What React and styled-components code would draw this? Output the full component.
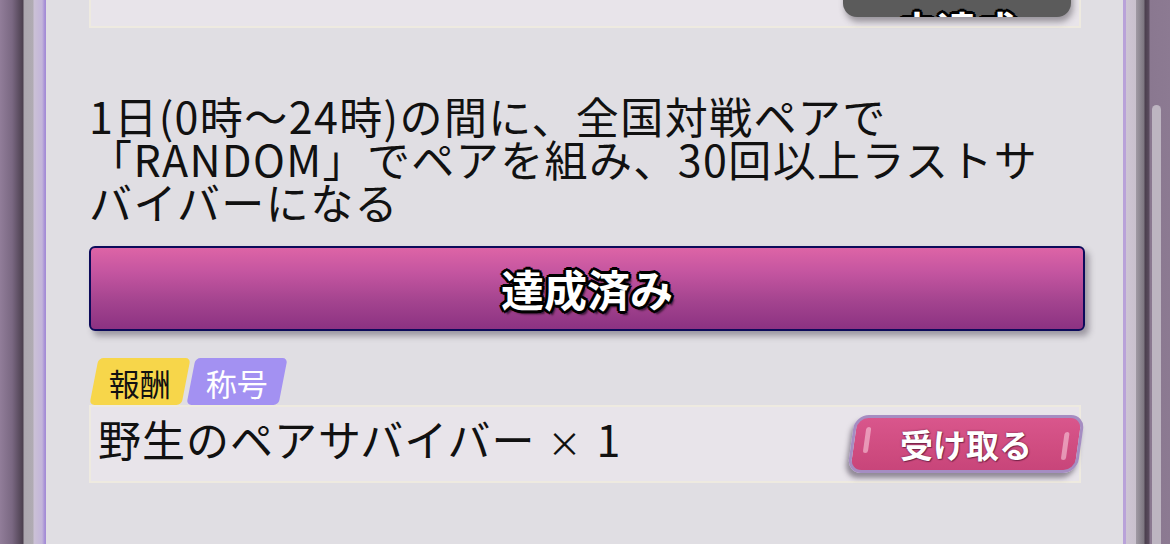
import styled, { createGlobalStyle } from "styled-components";

const GlobalStyle = createGlobalStyle`
  html, body {
    margin: 0;
    padding: 0;
    height: 544px;
    overflow: hidden;
    background: #e0dee3;
    font-family: "Noto Sans CJK JP", "Noto Sans", sans-serif;
  }
`

const Screen = styled.div`
  display: flex;
  width: 1170px;
  height: 544px;
  overflow: hidden;
`

const LeftFrame = styled.div`
  width: 46px;
  flex-shrink: 0;
  background: linear-gradient(90deg,
    #917d99 0px, #7a6882 12px, #4b3f4e 23px,
    #aba6ae 24px, #b0abb3 33px,
    #cbc1d6 34px, #c3b5da 42px, #a48cd6 45px, #a48cd6 46px);
`

const RightFrame = styled.div`
  position: relative;
  width: 47px;
  flex-shrink: 0;
  background: linear-gradient(90deg,
    #b9a2d9 0px, #b9a2d9 3px,
    #cec5d4 3px, #c9c1cd 13px,
    #a09aa4 13px, #7c7680 21px,
    #4b3f4e 22px, #5a4c5e 26px,
    #8a7890 27px, #8c7a92 47px);
`

const ScrollThumb = styled.div`
  position: absolute;
  left: 29px;
  top: 105px;
  width: 9px;
  bottom: 0;
  background: #bdb5c1;
  border-radius: 5px 5px 0 0;
`

const Panel = styled.div`
  flex: 1;
  display: flex;
  flex-direction: column;
  padding: 0 38px 0 43px;
  background: #e0dee3;
  color: #111;
`

const TopCard = styled.div`
  height: 98px;
  margin-top: -70px;
  margin-right: 4px;
  background: #e8e4ea;
  border: 2px solid #eeeae0;
  border-top: none;
  display: flex;
  align-items: flex-end;
  justify-content: flex-end;
  padding: 0 8px 9px 0;
  box-sizing: border-box;
`

const GreyButton = styled.div`
  width: 228px;
  height: 56px;
  background: #5b5b5b;
  border-radius: 14px;
  box-shadow: 2px 5px 6px rgba(60, 55, 65, 0.45);
  display: flex;
  align-items: flex-end;
  justify-content: center;
  overflow: hidden;
`

const OutlinedLabel = styled.span`
  color: #fff;
  font-weight: 700;
  font-size: ${p => p.$size}px;
  line-height: 1;
  text-shadow:
    -2px -2px 0 #000, 2px -2px 0 #000, -2px 2px 0 #000, 2px 2px 0 #000,
    0 -3px 0 #000, 0 3px 0 #000, -3px 0 0 #000, 3px 0 0 #000,
    3px 4px 2px rgba(0, 0, 0, 0.6);
  margin-bottom: ${p => p.$drop || 0}px;
`

const Description = styled.p`
  margin: 66px 0 0;
  font-size: 43px;
  line-height: 43px;
  font-weight: 400;
  letter-spacing: 1.4px;
  white-space: nowrap;
`

const DoneButton = styled.div`
  margin-top: 23px;
  height: 85px;
  box-sizing: border-box;
  border: 2px solid #0c0a5a;
  border-radius: 6px;
  background: linear-gradient(180deg, #dd64a6 0%, #c455a0 30%, #a4448f 65%, #8c3282 100%);
  box-shadow: 4px 5px 6px rgba(70, 65, 80, 0.45);
  display: flex;
  align-items: center;
  justify-content: center;
`

const TagRow = styled.div`
  display: flex;
  gap: 5px;
  margin-top: 27px;
  padding-left: 5px;
`

const Tag = styled.div`
  height: 47px;
  width: 92px;
  border-radius: 5px;
  transform: skewX(-11deg);
  background: ${p => p.$bg};
  color: ${p => p.$fg};
  display: flex;
  align-items: center;
  justify-content: center;
  font-size: 31px;
  line-height: 1;
`

const TagText = styled.span`
  transform: skewX(11deg);
  margin-top: 2px;
`

const RewardRow = styled.div`
  height: 78px;
  margin-right: 4px;
  box-sizing: border-box;
  background: #e8e4ea;
  border: 2px solid #eeeae0;
  display: flex;
  align-items: center;
  justify-content: space-between;
  padding: 0 0 0 7px;
`

const RewardName = styled.span`
  font-size: 43px;
  line-height: 1;
  letter-spacing: 1px;
  margin-top: -12px;
`

const Times = styled.span`
  font-size: 34px;
  margin: 0 14px 0 12px;
`

const ReceiveButton = styled.div`
  position: relative;
  width: 230px;
  height: 58px;
  margin-right: -2px;
  box-sizing: border-box;
  border: 3px solid #a58dc2;
  border-radius: 14px;
  transform: skewX(-8deg);
  background: linear-gradient(180deg, #d9568c 0%, #cf4c80 60%, #c8457a 100%);
  box-shadow: -2px 5px 5px rgba(60, 50, 70, 0.5);
  display: flex;
  align-items: center;
  justify-content: center;

  &::before, &::after {
    content: "";
    position: absolute;
    width: 5px;
    border-radius: 3px;
    background: rgba(255, 225, 235, 0.5);
  }
  &::before {
    left: 10px;
    top: 9px;
    height: 26px;
  }
  &::after {
    right: 10px;
    top: 14px;
    height: 28px;
  }
`

const ReceiveText = styled.span`
  transform: skewX(8deg);
  color: #fff;
  font-size: 33px;
  font-weight: 700;
  line-height: 1;
  text-shadow: 0 0 2px rgba(80, 20, 50, 0.8), 1px 1px 1px rgba(80, 20, 50, 0.6);
`

export default function App() {
  return (
    <>
      <GlobalStyle />
      <Screen>
        <LeftFrame />
        <Panel>
          <TopCard>
            <GreyButton>
              <OutlinedLabel $size={40} $drop={-32}>未達成</OutlinedLabel>
            </GreyButton>
          </TopCard>

          <Description>
            1日(0時〜24時)の間に、全国対戦ペアで<br />
            「RANDOM」でペアを組み、30回以上ラストサ<br />
            バイバーになる
          </Description>

          <DoneButton>
            <OutlinedLabel $size={43}>達成済み</OutlinedLabel>
          </DoneButton>

          <TagRow>
            <Tag $bg="#f7d64a" $fg="#111"><TagText>報酬</TagText></Tag>
            <Tag $bg="#a391f2" $fg="#fff"><TagText>称号</TagText></Tag>
          </TagRow>

          <RewardRow>
            <RewardName>野生のペアサバイバー<Times>×</Times>1</RewardName>
            <ReceiveButton>
              <ReceiveText>受け取る</ReceiveText>
            </ReceiveButton>
          </RewardRow>
        </Panel>
        <RightFrame>
          <ScrollThumb />
        </RightFrame>
      </Screen>
    </>
  )
}
